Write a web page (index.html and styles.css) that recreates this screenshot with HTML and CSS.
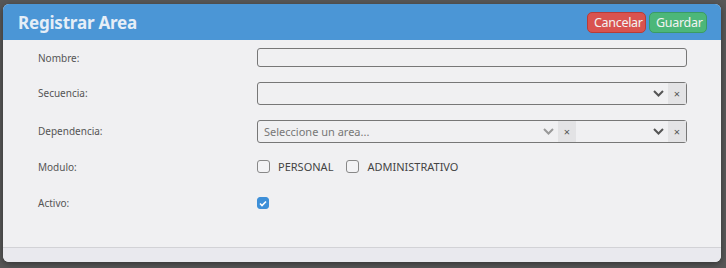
FILE: index.html
```html
<!DOCTYPE html>
<html lang="es">
<head>
  <meta charset="UTF-8">
  <title>Registrar Area</title>
  <link rel="stylesheet" href="styles.css">
</head>
<body>
  <div class="modal">
    <div class="modal-header">
      <h3>Registrar Area</h3>
      <div class="actions">
        <button class="btn btn-cancel">Cancelar</button>
        <button class="btn btn-save">Guardar</button>
      </div>
    </div>
    <div class="modal-body">
      <div class="row row-nombre">
        <label>Nombre:</label>
        <input type="text" class="field">
      </div>
      <div class="row row-sel">
        <label>Secuencia:</label>
        <div class="field select">
          <span class="value"></span>
          <span class="chev"><svg width="11" height="7" viewBox="0 0 11 7"><path d="M1 1l4.5 4.5L10 1" fill="none" stroke="#555" stroke-width="2"/></svg></span>
          <span class="clear">×</span>
        </div>
      </div>
      <div class="row row-sel">
        <label>Dependencia:</label>
        <div class="field select">
          <div class="inner">
            <span class="value placeholder">Seleccione un area...</span>
            <span class="chev light"><svg width="11" height="7" viewBox="0 0 11 7"><path d="M1 1l4.5 4.5L10 1" fill="none" stroke="#999" stroke-width="2"/></svg></span>
            <span class="clear">×</span>
          </div>
          <span class="value"></span>
          <span class="chev"><svg width="11" height="7" viewBox="0 0 11 7"><path d="M1 1l4.5 4.5L10 1" fill="none" stroke="#555" stroke-width="2"/></svg></span>
          <span class="clear">×</span>
        </div>
      </div>
      <div class="row row-mod">
        <label>Modulo:</label>
        <div class="checks">
          <span class="check"><span class="box"></span>PERSONAL</span>
          <span class="check"><span class="box"></span>ADMINISTRATIVO</span>
        </div>
      </div>
      <div class="row row-act">
        <label>Activo:</label>
        <span class="box checked"><svg width="8" height="7" viewBox="0 0 8 7"><path d="M1 3.5l2 2L7 1.5" fill="none" stroke="#fff" stroke-width="1.6"/></svg></span>
      </div>
    </div>
    <div class="modal-footer"></div>
  </div>
</body>
</html>
```

FILE: styles.css
```css
* {
  box-sizing: border-box;
  font-family: 'Noto Sans', sans-serif;
}
body {
  margin: 0;
  background: #575757;
  padding: 4px 5px 0 3px;
  height: 268px;
  overflow: hidden;
}
.modal {
  width: 718px;
  height: 258px;
  background: #f0f0f2;
  border-radius: 6px;
  overflow: hidden;
  display: flex;
  flex-direction: column;
  box-shadow: 0 2px 6px rgba(0,0,0,0.4);
}
.modal-header {
  height: 36px;
  background: #4b96d6;
  display: flex;
  align-items: center;
  justify-content: space-between;
  padding: 0 14px 0 15px;
}
.modal-header h3 {
  margin: 0;
  color: #e6eef7;
  font-size: 17px;
  font-weight: 700;
  letter-spacing: -0.2px;
}
.actions {
  display: flex;
  gap: 3px;
  margin-top: 1px;
}
.btn {
  height: 21px;
  border-radius: 5px;
  font-size: 12.5px;
  color: #f3f3f3;
  padding: 0 6px;
  cursor: pointer;
  letter-spacing: -0.3px;
}
.btn-cancel {
  background: #d9534f;
  border: 1px solid #b83c38;
  width: 59px;
}
.btn-save {
  background: #4cb779;
  border: 1px solid #3a9c63;
  width: 58px;
}
.modal-body {
  flex: 1;
  padding: 8px 0 0 35px;
}
.row {
  display: flex;
  align-items: center;
}
.row label {
  width: 219px;
  font-size: 10px;
  color: #555;
}
.row-sel label {
  margin-top: -2px;
}
.field {
  width: 430px;
  border: 1px solid #777;
  border-radius: 3px;
  background: #f0f0f2;
}
input.field {
  height: 19px;
  outline: none;
}
.row-nombre {
  height: 19px;
}
.row-sel {
  margin-top: 15px;
}
.select {
  height: 23px;
  display: flex;
  align-items: stretch;
}
.select .value {
  flex: 1;
  font-size: 11px;
  color: #444;
  display: flex;
  align-items: center;
  padding-left: 6px;
}
.select .placeholder {
  color: #777;
}
.inner {
  width: 318px;
  display: flex;
  align-items: stretch;
}
.chev {
  width: 15px;
  display: flex;
  align-items: center;
  justify-content: flex-start;
}
.clear {
  width: 18px;
  background: #e3e3e5;
  color: #555;
  font-size: 11px;
  display: flex;
  align-items: center;
  justify-content: center;
}
.row-mod {
  margin-top: 16px;
}
.checks {
  display: flex;
  gap: 13px;
}
.check {
  display: flex;
  align-items: center;
  font-size: 11px;
  color: #444;
  gap: 8px;
}
.box {
  width: 13px;
  height: 13px;
  border: 1px solid #888;
  border-radius: 3px;
  background: #f3f3f5;
  display: inline-flex;
  align-items: center;
  justify-content: center;
}
.box.checked {
  width: 12px;
  height: 12px;
  background: #3d8fd8;
  border-color: #3d8fd8;
}
.row-act {
  margin-top: 22px;
}
.modal-footer {
  height: 15px;
  border-top: 1px solid #d2d2d6;
  background: #e9e9ee;
}
```
